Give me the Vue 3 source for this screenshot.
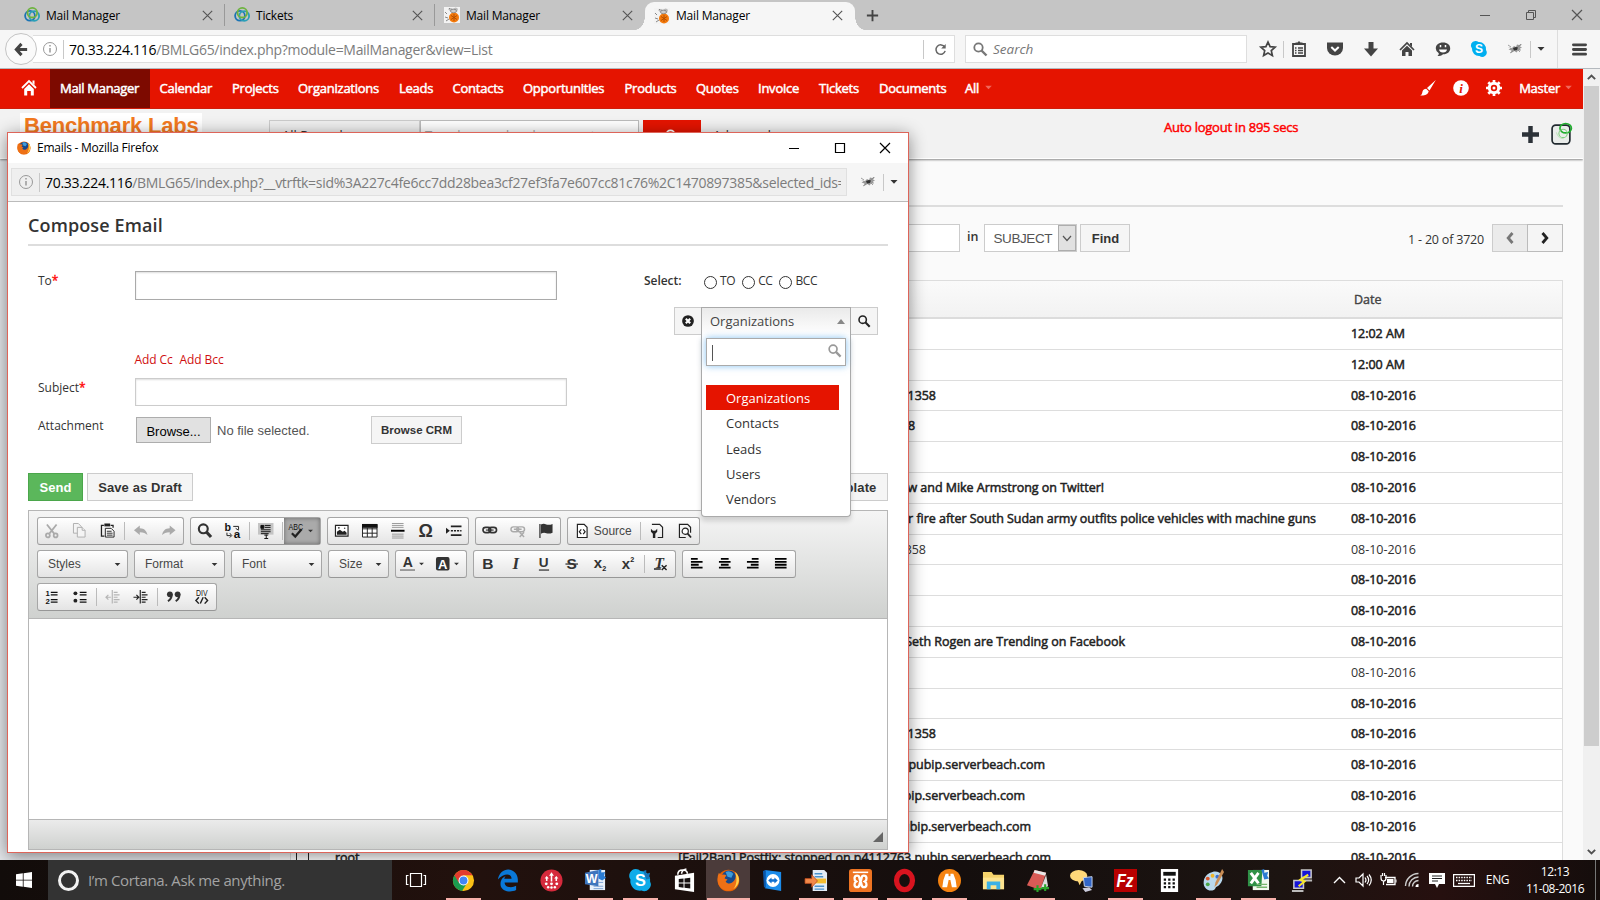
<script setup>
const tabs = [
  { icon: 'rings', title: 'Mail Manager' },
  { icon: 'rings', title: 'Tickets' },
  { icon: 'bug', title: 'Mail Manager' },
  { icon: 'bug', title: 'Mail Manager', active: true },
]

const navItems = ['Mail Manager', 'Calendar', 'Projects', 'Organizations', 'Leads', 'Contacts', 'Opportunities', 'Products', 'Quotes', 'Invoice', 'Tickets', 'Documents', 'All']

const rows = [
  { date: '12:02 AM' },
  { date: '12:00 AM' },
  { subject: '1358', end: 936, date: '08-10-2016' },
  { subject: '8', end: 915, date: '08-10-2016' },
  { date: '08-10-2016' },
  { subject: 'w and Mike Armstrong on Twitter!', end: 1104, date: '08-10-2016' },
  { subject: 'r fire after South Sudan army outfits police vehicles with machine guns', end: 1316, date: '08-10-2016' },
  { subject: '1358', end: 926, date: '08-10-2016', read: true },
  { date: '08-10-2016' },
  { date: '08-10-2016' },
  { subject: 'Seth Rogen are Trending on Facebook', end: 1125, date: '08-10-2016' },
  { date: '08-10-2016', read: true },
  { date: '08-10-2016' },
  { subject: '1358', end: 936, date: '08-10-2016' },
  { subject: 'pubip.serverbeach.com', end: 1045, date: '08-10-2016' },
  { subject: 'pubip.serverbeach.com', end: 1025, date: '08-10-2016' },
  { subject: 'pubip.serverbeach.com', end: 1031, date: '08-10-2016' },
  { from: 'root', subject: '[Fail2Ban] Postfix: stopped on p4112763.pubip.serverbeach.com', end: 1051, date: '08-10-2016' },
]

const options = ['Organizations', 'Contacts', 'Leads', 'Users', 'Vendors']

const toolbarRows = [
  [
    { items: ['cut', 'copy', 'paste', '|', 'undo', 'redo'] },
    { items: ['find', 'replace', '|', 'selectall', '|', 'spell'] },
    { items: ['image', 'table', 'rule', 'omega', 'pagebreak'] },
    { items: ['link', 'unlink', 'flag'] },
    { items: ['source', '|', 'template', 'preview'] },
  ],
  [
    { combo: 'Styles', cls: 'wide' },
    { combo: 'Format', cls: 'wide' },
    { combo: 'Font', cls: 'wide' },
    { combo: 'Size', cls: 'narrow' },
    { items: ['color', 'bgcolor'] },
    { items: ['bold', 'italic', 'underline', 'strike', 'sub', 'sup', '|', 'clear'] },
    { items: ['left', 'center', 'right', 'justify'] },
  ],
  [{ items: ['numlist', 'bullist', '|', 'outdent', 'indent', '|', 'quote', 'div'] }],
]

const apps = [
  { icon: 'chrome', run: true }, { icon: 'edge' }, { icon: 'redball' }, { icon: 'word', run: true },
  { icon: 'skypeBig', run: true }, { icon: 'store' }, { icon: 'firefox', run: true, active: true }, { icon: 'teamviewer' },
  { icon: 'transfer', run: true }, { icon: 'xampp', run: true }, { icon: 'opera', run: true }, { icon: 'binoculars', run: true },
  { icon: 'folder' }, { icon: 'notebook', run: true }, { icon: 'chat' }, { icon: 'filezilla', run: true },
  { icon: 'calc' }, { icon: 'paint', run: true }, { icon: 'excel', run: true }, { icon: 'putty' },
]

const F = 'font-family="Liberation Sans, sans-serif"'
const firefoxArt = '<circle cx="12" cy="12" r="11.3" fill="#e66000"/><circle cx="12.500" cy="9.500" r="8" fill="#17498c"/><path d="M9 3q5-2 8 2l-2 4-4-1z" fill="#3e9bd8"/><path d="M2 4q1 2 3 2 3-1 5 1-2 1-2 3l3 1-2 2c2 3 6 3 9-1 2-3 2-6 0-9 5 3 6 9 3 14-4 7-14 8-19 0C0 13 0 8 2 4z" fill="#ee7015"/><path d="M19 3c6 5 5 14-2 18 4-5 4-11 2-18z" fill="#ffd14a"/>'
const icons = {
  rings: '<g fill="none" stroke-width="1.8"><circle cx="6" cy="8.8" r="4.9" stroke="#1b74b4"/><circle cx="10.2" cy="9" r="4.9" stroke="#2b9fb8"/><circle cx="8.3" cy="5.7" r="4.8" stroke="#6db33f"/></g>',
  bug: '<rect width="16" height="16" fill="#f3f3f3"/><path d="M4 2q3-2 5 0l-2 3zM9 2q3-3 5 0l-1 3-3-1z" fill="#bbb"/><path d="M1 5l2 2M1 10l3 1M2 14l3-2M5 1l1 1" stroke="#888"/><circle cx="10" cy="10.500" r="5" fill="#f47a0c"/><ellipse cx="9.500" cy="4" rx="3" ry="1.800" fill="#ccc" stroke="#666" stroke-width=".6"/><path d="M7 8.500l6 4M13 8.500l-6 4M10 7v7" stroke="#b04d00" stroke-width=".9"/>',
  x: '<path d="M3 3l10 10M13 3L3 13" stroke="currentColor" stroke-width="1.2" fill="none"/>',
  plus: '<path d="M8 2v12M2 8h12" stroke="currentColor" stroke-width="2"/>',
  min: '<path d="M3 8.5h10" stroke="currentColor"/>',
  max: '<path d="M3.5 3.5h9v9h-9z" fill="none" stroke="currentColor" stroke-width="1.2"/>',
  restore: '<path d="M3.500 5.500h7v7h-7zM5.500 5V3.500h7v7H11" fill="none" stroke="currentColor"/>',
  back: '<path d="M8 2L2.500 8 8 14M3 8h11" stroke="#444" stroke-width="3.200" fill="none"/>',
  info: '<circle cx="8" cy="8" r="6.500" fill="none" stroke="#999"/><path d="M8 7v4.500M8 4v1.600" stroke="#999" stroke-width="1.500"/>',
  reload: '<path d="M12.500 5.500A5 5 0 1 0 13 9.500" fill="none" stroke="#666" stroke-width="1.600"/><path d="M13.500 2v5H8.700z" fill="#666"/>',
  search: '<circle cx="6.500" cy="6.500" r="4.200" fill="none" stroke="currentColor" stroke-width="1.800"/><path d="M9.500 9.500l5 5" stroke="currentColor" stroke-width="2.400"/>',
  star: '<path d="M8 1l2.100 4.700 5 .5-3.800 3.400 1.100 5L8 12.100l-4.400 2.500 1.100-5L.9 6.200l5-.5z" fill="none" stroke="#444" stroke-width="1.700"/>',
  clip: '<path d="M2 3h12v12H2z" fill="none" stroke="#444" stroke-width="1.800"/><path d="M4.500 3V1.500h2L8 0l1.500 1.500h2V4h-7z" fill="#444"/><path d="M4 7h1.500M7 7h5M4 9.500h1.500M7 9.500h5M4 12h1.500M7 12h5" stroke="#444" stroke-width="1.400"/>',
  pocket: '<path d="M0 1.500h16V7a8 7.500 0 0 1-16 0z" fill="#444"/><path d="M4.300 6L8 9.500 11.700 6" fill="none" stroke="#fff" stroke-width="2"/>',
  down: '<path d="M5.500 1h5v6.500H15L8 15.500 1 7.500h4.500z" fill="#444"/>',
  home: '<path d="M1 9l7-7 7 7" fill="none" stroke="#444" stroke-width="1.700"/><path d="M11 2h2v4l-2-2zM3 9.500L8 4.700l5 4.800V15H9.500v-4h-3v4H3z" fill="#444"/>',
  smile: '<path d="M8 1.500c4.500 0 7.200 2.500 7.200 6S12 13.500 8 13.300c-1.500 1.500-3.500 1.700-5.500 1.700q1.500-1 1.300-2.700Q.8 10.500.8 7.500C.8 4 3.500 1.500 8 1.500z" fill="#444"/><path d="M5.500 4v2.300M10.500 4v2.300" stroke="#fff" stroke-width="1.500"/><path d="M4 8.500h8q-.5 3-4 3t-4-3z" fill="#fff"/>',
  skype: `<path d="M4.500 0a4.500 4.500 0 0 1 3 1 7 7 0 0 1 7.500 8 4.500 4.500 0 0 1-6.500 6A7 7 0 0 1 1 7.500 4.500 4.500 0 0 1 4.500 0z" fill="#00aff0"/><text x="8" y="12.300" ${F} font-size="12" font-weight="700" fill="#fff" text-anchor="middle">S</text>`,
  plane: '<path d="M1 6.500l4 .5 2-2 2 1 1-2.500 2 .5 3-1-2 2.500 2 1-2 1 1 2-3 0-1.500 2-2-1.500-3.500 2 .5-2.500-3-1 2-1z" fill="#999"/><path d="M6 7l3-1 2 .5-1 2.500-3 .5z" fill="#333"/><path d="M1 4l3 2M14 3l-3 3M3 12l3-2M13 11l-2-2" stroke="#888" stroke-width=".8"/>',
  caret: '<path d="M4.500 6h7L8 9.800z" fill="currentColor"/>',
  menu: '<path d="M1.500 3h13M1.500 8h13M1.500 13h13" stroke="#444" stroke-width="3" stroke-linecap="round"/>',
  homeNav: '<path d="M1 8l7-7 7 7" fill="none" stroke="#fff" stroke-width="1.800"/><path d="M11.500.5h2V5l-2-2zM3.200 9L8 4.300 12.800 9v6.500h-3V11H6.200v4.500h-3z" fill="#fff"/>',
  brush: '<path d="M15.800 0L7 8l2.500 2.500zM6.200 8.800l2.500 2.500C8 15 4 16 0 15.500c2-.5 2-2 2.500-4 .5-1.600 2-2.700 3.700-2.700z" fill="#fff"/>',
  infoNav: '<circle cx="8" cy="8" r="7.800" fill="#fff"/><text x="8" y="12.500" font-family="Liberation Serif, serif" font-size="13" font-style="italic" font-weight="700" fill="#e51400" text-anchor="middle">i</text>',
  gear: '<circle cx="8" cy="8" r="4.700" fill="none" stroke="#fff" stroke-width="3"/><path d="M8 0v3M8 13v3M0 8h3M13 8h3M2.300 2.300l2 2M11.700 11.700l2 2M13.700 2.300l-2 2M4.300 11.700l-2 2" stroke="#fff" stroke-width="2.700"/><circle cx="8" cy="8" r="1.500" fill="#fff"/>',
  plusBig: '<path d="M8 0v16M0 8h16" stroke="#2c3238" stroke-width="4.200"/>',
  badge: '<rect x="1" y="2" width="17" height="18" rx="3.500" fill="#e9ecea" stroke="#222a30" stroke-width="1.600"/><g fill="none"><ellipse cx="14" cy="5" rx="5.500" ry="4.500" stroke="#1fae2e" stroke-width="1.600"/><circle cx="11.500" cy="10" r="4" stroke="#7fcf7f"/><path d="M5 9q2 6 7 6" stroke="#bfe3bf"/></g>',
  chevL: '<path d="M10.500 3l-4.300 5 4.300 5" fill="none" stroke="#777" stroke-width="2.800"/>',
  chevR: '<path d="M5.500 3l4.300 5-4.300 5" fill="none" stroke="#222" stroke-width="2.800"/>',
  chevD: '<path d="M4 6l4 4.500L12 6" fill="none" stroke="#555" stroke-width="1.200"/>',
  scrollU: '<path d="M3.500 10L8 5.500l4.500 4.500" fill="none" stroke="#505050" stroke-width="2.300"/>',
  scrollD: '<path d="M3.500 6L8 10.500 12.500 6" fill="none" stroke="#505050" stroke-width="2.300"/>',
  clearSel: '<circle cx="8" cy="8" r="6.700" fill="#222"/><path d="M5.500 5.500l5 5M10.500 5.500l-5 5" stroke="#fff" stroke-width="2.400"/>',
  cut: '<g stroke="#aaa" fill="none" stroke-width="1.800"><path d="M3 1.500l7.500 9.500M13 1.500L5.500 11"/><circle cx="4" cy="12.800" r="2"/><circle cx="12" cy="12.800" r="2"/></g>',
  copy: '<g stroke="#b0b0b0" fill="#f4f4f4"><path d="M1.500.500h5l3 3v7h-8z"/><path d="M5.500 4.500h5l3 3v7h-8z"/><path d="M10.500 4.500v3h3" /></g>',
  paste: '<path d="M4 2.500H1.500v11h3M11 2.500h2.500V5" fill="none" stroke="#222" stroke-width="1.300"/><path d="M4.500.500h6v3h-6z" fill="#222"/><path d="M5.500 5.500h6l3 3v6h-9z" fill="#fff" stroke="#222"/><path d="M7 8.500h5M7 10.500h6M7 12.500h6" stroke="#222"/>',
  undo: '<path d="M1 7.500l6-5v3c5 0 7 3 8 7-2-2-4-3-8-3v3z" fill="#aaa"/>',
  redo: '<path d="M15 7.500L9 2.500v3c-5 0-7 3-8 7 2-2 4-3 8-3v3z" fill="#aaa"/>',
  find: '<circle cx="6.500" cy="6" r="4.600" fill="none" stroke="#333" stroke-width="2.200"/><path d="M9.500 9l5 5.500" stroke="#333" stroke-width="3.200"/>',
  replace: `<text x="-.5" y="8" ${F} font-size="11" font-weight="700" fill="#111">b</text><text x="9" y="15.500" ${F} font-size="12" font-weight="700" fill="#111">a</text><path d="M8.500 3.500H14V7M11 5.500l3 2 M2 10v3h4M5 10.500l2 2.500-2 2" fill="none" stroke="#222"/>`,
  selectall: '<path d="M0 0h16v12H0z" fill="#c4c4c4"/><path d="M3 2.500h3v3H3zM7 2.500h6M7 4.500h6M3 7h10M3 9h10M3 11h8" stroke="#111" fill="#111"/><path d="M6.500 12.500h4M6.500 16h4M8.500 12v4" stroke="#111"/>',
  spell: `<text x="8" y="7" ${F} font-size="9.500" textLength="15" lengthAdjust="spacingAndGlyphs" fill="#111" text-anchor="middle">ABC</text><path d="M4 10.500L7.500 14 14 6.500" fill="none" stroke="#222" stroke-width="2.300"/>`,
  image: '<path d="M1.500 2.500h13v11h-13z" fill="#fff" stroke="#222" stroke-width="1.200"/><path d="M3 12V9l3-2 3 2 2-1 2 2v2z" fill="#222"/><circle cx="5" cy="5" r="1" fill="#444"/><circle cx="11" cy="5.500" r=".8" fill="#444"/>',
  table: '<path d="M.5 1.500h15v13H.5zM.5 6h15M.5 10.500h15M5.500 5v9.500M10.500 5v9.500" fill="#fff" stroke="#222"/><path d="M0 1h16v4H0z" fill="#111"/>',
  rule: '<path d="M2 .5h12M2 2.500h12M2 4.500h12M2 11.500h12M2 13.500h12M2 15.500h12" stroke="#999"/><path d="M1 8h14" stroke="#000" stroke-width="2"/>',
  omega: `<text x="8" y="14.500" ${F} font-size="18.500" font-weight="700" fill="#333" text-anchor="middle">Ω</text>`,
  pagebreak: '<path d="M0 5l4 3-4 3z" fill="#222"/><path d="M5 3.500h11M5 12.500h11" stroke="#222" stroke-width="2"/><path d="M5 8h11" stroke="#222" stroke-width="1.300" stroke-dasharray="2.200 1"/>',
  link: '<g fill="none" stroke="#333" stroke-width="1.700"><rect x="1" y="4.500" width="8" height="5.500" rx="2.700"/><rect x="7" y="4.500" width="8" height="5.500" rx="2.700"/></g><path d="M4 7.300h8" stroke="#333" stroke-width="1.200"/>',
  unlink: '<g fill="none" stroke="#aaa" stroke-width="1.500"><rect x="1" y="4" width="8" height="5" rx="2.500"/><rect x="7" y="4" width="8" height="5" rx="2.500"/><path d="M4 6.500h8M10 9.500l4.500 5M14.500 9.500l-4.500 5"/></g>',
  flag: '<path d="M2 1v14.500" stroke="#222" stroke-width="1.200"/><path d="M3 1.500q3-1.500 5.500 0 3 1 6.500-.5v9q-3.500 1.500-6.500.5-2.500-1-5.500.5z" fill="#333"/>',
  source: '<path d="M3.500 1.500h7l3 3v10.500h-10z" fill="#fff" stroke="#222" stroke-width="1.200"/><path d="M7.500 6.500l-2 2.500 2 2.500M9.500 6.500l2 2.500-2 2.500" fill="none" stroke="#222" stroke-width="1.200"/>',
  template: '<path d="M6 1.500h5l3 3v10.500H9M3 1.500h3" fill="none" stroke="#222" stroke-width="1.200"/><path d="M2 6v3l2 2v4.500h2.500V11l2-2V6L6.500 8H4z" fill="#222"/>',
  preview: '<path d="M14 10V4.500l-3-3H2.500v13.500H9" fill="none" stroke="#222" stroke-width="1.200"/><circle cx="8.500" cy="8.500" r="3.200" fill="#fff" stroke="#222" stroke-width="1.200"/><path d="M11 11l3.500 4" stroke="#222" stroke-width="1.800"/>',
  color: `<text x="8" y="11.500" ${F} font-size="14.500" font-weight="700" fill="#333" text-anchor="middle">A</text><path d="M0 14.500h15.500" stroke="#999" stroke-width="2"/>`,
  bgcolor: `<rect x="1" y="1" width="14" height="14" rx="2" fill="#333"/><text x="8" y="13" ${F} font-size="13.500" font-weight="700" fill="#fff" text-anchor="middle">A</text>`,
  bold: `<text x="8" y="13.500" ${F} font-size="16" font-weight="700" fill="#333" text-anchor="middle">B</text>`,
  italic: '<text x="8" y="13.500" font-family="Liberation Serif, serif" font-size="17.500" font-style="italic" font-weight="700" fill="#333" text-anchor="middle">I</text>',
  underline: `<text x="8" y="11.500" ${F} font-size="14" font-weight="700" fill="#333" text-anchor="middle">U</text><path d="M3 14.500h10.500" stroke="#333" stroke-width="1.300"/>`,
  strike: `<text x="8" y="13.500" ${F} font-size="16" font-weight="700" fill="#333" text-anchor="middle">S</text><path d="M1.500 8.300h13" stroke="#333" stroke-width="1.300"/>`,
  sub: `<text x="6" y="12" ${F} font-size="15.500" font-weight="700" fill="#333" text-anchor="middle">x</text><text x="10.500" y="15" ${F} font-size="7.500" font-weight="700" fill="#222">2</text>`,
  sup: `<text x="6" y="13" ${F} font-size="15.500" font-weight="700" fill="#333" text-anchor="middle">x</text><text x="10.500" y="6.500" ${F} font-size="7.500" font-weight="700" fill="#222">2</text>`,
  clear: `<text x="6.500" y="12" font-family="Liberation Serif, serif" font-size="16" font-style="italic" font-weight="700" fill="#333" text-anchor="middle">T</text><path d="M1 13.500h7M9 9.500l5 5M14 9.500l-5 5" stroke="#222" stroke-width="1.500"/>`,
  left: '<path d="M2 3h7M2 6h12M2 9h8M2 12h12" stroke="#000" stroke-width="1.900"/>',
  center: '<path d="M4 3h8M2 6h12M4 9h8M2 12h12" stroke="#000" stroke-width="1.900"/>',
  right: '<path d="M7 3h7M2 6h12M6 9h8M2 12h12" stroke="#000" stroke-width="1.900"/>',
  justify: '<path d="M2 3h12M2 6h12M2 9h12M2 12h12" stroke="#000" stroke-width="1.900"/>',
  numlist: `<text x="1.500" y="7.500" ${F} font-size="8" font-weight="700" fill="#111">1</text><text x="1.500" y="15" ${F} font-size="8" font-weight="700" fill="#111">2</text><path d="M7 3.500h7M7 6h7M7 11h7M7 13.500h7" stroke="#111" stroke-width="1.200"/>`,
  bullist: '<circle cx="3.500" cy="4.500" r="2" fill="#222"/><circle cx="3.500" cy="12" r="2" fill="#222"/><path d="M8 3.500h7M8 6h7M8 11h7M8 13.500h7" stroke="#111" stroke-width="1.200"/>',
  outdent: '<path d="M7.500 1v14M9 3.500h4M9 6h6M9 8.500h4M9 11h6M9 13.500h4M1 8.500h5M3.500 6L1 8.500 3.500 11" fill="none" stroke="#b5b5b5" stroke-width="1.200"/>',
  indent: '<path d="M7.500 1v14M9 3.500h4M9 6h6M9 8.500h4M9 11h6M9 13.500h4M.5 8.500h5M3.500 6L6 8.500 3.500 11" fill="none" stroke="#222" stroke-width="1.200"/>',
  quote: '<circle cx="4" cy="5.500" r="3" fill="#333"/><circle cx="12" cy="5.500" r="3" fill="#333"/><path d="M5.800 5.500q.3 4.500-3.800 7M13.800 5.500q.3 4.500-3.800 7" fill="none" stroke="#333" stroke-width="2"/>',
  div: `<text x="8" y="7" ${F} font-size="9.500" textLength="12" lengthAdjust="spacingAndGlyphs" fill="#111" text-anchor="middle">DIV</text><path d="M5 8.500l-3 3.300 3 3.300M11 8.500l3 3.300-3 3.300M9.500 8.500l-3 6.500" fill="none" stroke="#222" stroke-width="1.500"/>`,
  win: '<path d="M0 2.300l6.800-1v6.400H0zM7.600 1.200L16 0v7.700H7.600zM0 8.400h6.800v6.300L0 13.800zM7.600 8.400H16V16l-8.400-1.200z" fill="#fff"/>',
  taskview: '<path d="M5.500 2.500h11v13h-11zM3.500 4.500h-2v9h2M18.500 4.500h2v9h-2" fill="none" stroke="#fff" stroke-width="1.200"/>',
  chrome: '<circle cx="12" cy="12" r="11" fill="#fbc116"/><path d="M2.500 6.500A11 11 0 0 0 10.500 22.900L16 14z" fill="#1a9c50"/><path d="M12 6.500h9.500a11 11 0 0 0-19 0L7 14z" fill="#e33b2e"/><circle cx="12" cy="12" r="5.200" fill="#fff"/><circle cx="12" cy="12" r="4.100" fill="#4285f4"/>',
  edge: '<path d="M2 11C3 4 8 .500 12.500.500 19 .500 22.800 6 22.800 11v3H9c0 5.500 8 6 12 3.500v4.500c-6 3-14 1.500-16-4C4 14 5.500 9 10 7.500c-1 1-1.300 2-1.300 2.800h7.500C16.500 4 8 4 2 11z" fill="#0a78d7"/>',
  redball: '<circle cx="12" cy="12" r="11.500" fill="#d62a3c"/><path d="M12 13V6M7 12.500V9M17 12.500V9" stroke="#fff" stroke-width="1.600" fill="none"/><path d="M9.500 7L12 3.500 14.500 7zM4.800 10L7 7.200 9.200 10zM14.800 10L17 7.200l2.200 2.800z" fill="#fff"/><g fill="#fff"><circle cx="6.500" cy="15.500" r="1.500"/><circle cx="12" cy="15.500" r="1.500"/><circle cx="17.500" cy="15.500" r="1.500"/><circle cx="8.500" cy="19" r="1.300"/><circle cx="12" cy="19.300" r="1.300"/><circle cx="15.500" cy="19" r="1.300"/></g>',
  word: `<path d="M6 1h16v21H6z" fill="#e8f0fa"/><path d="M15 4h5M15 7h5M15 14h5M10 18h10M10 20.500h10" stroke="#7ba1d4"/><path d="M1 4l14-3v17L1 16z" fill="#3f75bd"/><text x="8" y="15" ${F} font-size="13" font-weight="700" fill="#fff" text-anchor="middle">W</text><path d="M15 1l3-1v4l4-1-1 4 2 2-4 3-4-2z" fill="#2b7cd3"/>`,
  skypeBig: `<path d="M7 0a7 7 0 0 1 5 2 10 10 0 0 1 10 11 7 7 0 0 1-9 9.500A10 10 0 0 1 1.500 11 7 7 0 0 1 7 0z" fill="#0eabe9"/><text x="12" y="18" ${F} font-size="17" font-weight="700" fill="#fff" text-anchor="middle">S</text><path d="M15 2l3-1v4l4-1-1 4 1 2-4 1z" fill="#1575b8"/>`,
  store: '<path d="M2 7l20-3v20L2 21z" fill="#fff"/><path d="M5 6q0-5 5-5t5 4M9 5q0-4 5-5" fill="none" stroke="#fff" stroke-width="1.600"/><path d="M6 10.500l5-.6v4.300H6zM12 9.800l6-.8v5.200h-6zM6 15.200h5v4.300l-5-.6zM12 15.200h6v5.200l-6-.8z" fill="#151010"/>',
  firefox: firefoxArt,
  teamviewer: '<path d="M4 1l17 2v20L4 20z" fill="#1b8bea"/><path d="M2 2l3-1v19l-2-2z" fill="#0a55a8"/><circle cx="12.500" cy="12" r="6.800" fill="#fff"/><path d="M7.500 12L11 8.800v2h3v-2l3.500 3.200L14 15.200v-2h-3v2z" fill="#0f6fd0"/>',
  transfer: '<path d="M8 1h12l3 3v19H8z" fill="#e3edf7"/><path d="M10 5h8M10 8h9M10 18h10M10 21h10" stroke="#4b93cc" stroke-width="1.500"/><path d="M10 10h12v5H10z" fill="#f5bd2f"/><path d="M0 10h7V6l6 6.500L7 19v-4H0z" fill="#f28a4a" stroke="#b9481c" stroke-width=".8"/>',
  xampp: '<rect width="24" height="24" rx="3" fill="#ee7422"/><path d="M4 3.500h16" stroke="#fff" stroke-width="1.600"/><path d="M12 13c-2-3 0-6-3.500-6S5 11.500 7.500 13C5 14.500 5 19 8.500 19S10 16 12 13c2-3 0-6 3.500-6s3.500 4.500 1 6c2.500 1.500 2.500 6-1 6S14 16 12 13z" fill="none" stroke="#fff" stroke-width="2.400"/>',
  opera: '<ellipse cx="12" cy="12" rx="8.300" ry="9.500" fill="none" stroke="#d8141f" stroke-width="5.500"/>',
  binoculars: '<circle cx="12" cy="12" r="12" fill="#f5820f"/><path d="M8 5h3v7l-1.500 7H4.500Q5 11 8 5zM13 5h3q3 6 3.500 14h-5L13 12z" fill="#fff"/><path d="M10.500 7.500h3v4h-3z" fill="#fff"/>',
  folder: '<path d="M1 3h9l2 3h11v15H1z" fill="#f5d36b"/><path d="M1 9h22v12H1z" fill="#fde48f"/><path d="M5 21v-8h14v8h-4v-4H9v4z" fill="#3cb1e6"/>',
  notebook: '<path d="M9 1l12 3-6 18L1 17z" fill="#d95b56"/><path d="M9 1l12 3-1 3L8 4z" fill="#e8e8e8"/><path d="M15 21l6-15 2 12z" fill="#ddd"/><path d="M8 21h8M12 17v7M16 20h8M20 16v7" stroke="#2aa42a" stroke-width="2.200"/>',
  chat: '<ellipse cx="9" cy="7" rx="9" ry="6" fill="#ffd879"/><path d="M8 12l2 5 3-6z" fill="#ffd879"/><path d="M14 9l9-1v11l-8-1z" fill="#3266c8" stroke="#c9d4ea"/><path d="M13 20l7-1 3 3-7 2z" fill="#ccd"/>',
  filezilla: `<rect width="24" height="24" fill="#b80000"/><text x="11.500" y="19" ${F} font-size="19" font-weight="700" font-style="italic" textLength="18" lengthAdjust="spacingAndGlyphs" fill="#fff" text-anchor="middle">Fz</text>`,
  calc: '<path d="M3 0h18v24H3z" fill="#fff"/><path d="M5.500 3h13v4h-13z" fill="#111"/><path d="M6 11h12M6 15h12M6 19h12" stroke="#111" stroke-width="2.400" stroke-dasharray="2.400 2.200"/>',
  paint: '<path d="M11 3C19 1 24 8 20 14s-5 3-6 6-8 4-11-1S2 5 11 3z" fill="#b9d9ee"/><circle cx="6" cy="10" r="2" fill="#d9572d"/><circle cx="11" cy="7" r="2" fill="#f0b52a"/><circle cx="6" cy="16" r="2" fill="#4aa648"/><circle cx="16" cy="8" r="2" fill="#3a6fd0"/><path d="M21 0l2 3-7 13-3 3 1-5z" fill="#c98d55"/>',
  excel: '<path d="M6 1h17v21H6z" fill="#f2f8ee"/><path d="M1 1h15l-1 17H1z" fill="#2f9147"/><path d="M4 4l8 11M12 4L4 15" stroke="#fff" stroke-width="3"/><path d="M15 1l3-1v4l4-1-1 4 2 3-5 1z" fill="#2b7cd3"/><path d="M10 16h11M10 19h11" stroke="#78b56e" stroke-width="1.400"/>',
  putty: '<path d="M11 1h10v8H11zM3 12h10v8H3z" fill="#1414d8" stroke="#c8c8c8" stroke-width="1.600"/><path d="M10 11h12v2H10zM1 22h12v2H1z" fill="#bbb"/><path d="M18 6l-8 5 4 2-6 5" fill="none" stroke="#f5e62a" stroke-width="2.200"/>',
  trayUp: '<path d="M3 11l5.500-5.500L14 11" fill="none" stroke="#fff" stroke-width="1.400"/>',
  speaker: '<path d="M1 6h3l4-4v12l-4-4H1zM10 5.500q2 2.500 0 5M12 4q3.300 4 0 8M14 2.500q4.500 5.500 0 11" fill="none" stroke="#fff" stroke-width="1.200"/>',
  battery: '<path d="M5 5.500h10v7H6" fill="none" stroke="#fff" stroke-width="1.300"/><path d="M7 7h6.500v4H7zM15.500 7.500h1v3h-1z" fill="#fff"/><path d="M1 3v3q0 3 2.500 3T6 6V3M2.500 1v3M4.500 1v3M3.500 9v4" fill="none" stroke="#fff" stroke-width="1.200"/>',
  wifi: '<path d="M1.500 14A13 13 0 0 1 14.500 1.500M5 14.500A9.500 9.500 0 0 1 14.500 5M8.500 14.500a6 6 0 0 1 6-6" fill="none" stroke="#ccc" stroke-width="1.400"/><path d="M11.500 15a3 3 0 0 1 3-3v3z" fill="#fff"/>',
  notif: '<path d="M0 1h16v11h-6l-2 4-2-4H0z" fill="#fff"/><path d="M3 4h10M3 6.500h10M3 9h6" stroke="#222"/>',
  keyboard: '<path d="M.6 1.600h20.800v11.800H.6z" fill="none" stroke="#fff" stroke-width="1.200"/><path d="M3 4.500h16M3 7.500h16" stroke="#fff" stroke-width="1.300" stroke-dasharray="1.500 1.100"/><path d="M5 10.500h12" stroke="#fff" stroke-width="1.300"/>',
}

const browserTools = ['clip', 'pocket', 'down', 'home', 'smile', 'skype', 'plane']
const withMenu = ['spell', 'color', 'bgcolor']
</script>

<template>
  <div class="desktop">
    <header class="tabbar">
      <div v-for="(t, i) in tabs" :key="i" class="tab" :class="{ active: t.active }">
        <svg class="i16" viewBox="0 0 16 16" v-html="icons[t.icon]"></svg>
        <span>{{ t.title }}</span>
        <svg class="i16 close" viewBox="0 0 16 16" v-html="icons.x"></svg>
      </div>
      <svg class="newtab" viewBox="0 0 16 16" v-html="icons.plus"></svg>
      <div class="winbtns">
        <svg viewBox="0 0 16 16" v-html="icons.min"></svg>
        <svg viewBox="0 0 16 16" v-html="icons.restore"></svg>
        <svg viewBox="0 0 16 16" v-html="icons.x"></svg>
      </div>
    </header>

    <div class="urlbar">
      <div class="backbtn"><svg viewBox="0 0 16 16" v-html="icons.back"></svg></div>
      <div class="field address">
        <svg class="i16" viewBox="0 0 16 16" v-html="icons.info"></svg>
        <i class="vsep"></i>
        <span class="url"><b>70.33.224.116</b>/BMLG65/index.php?module=MailManager&amp;view=List</span>
        <i class="vsep"></i>
        <svg class="reload" viewBox="0 0 16 16" v-html="icons.reload"></svg>
      </div>
      <div class="field searchbox">
        <svg class="i16" viewBox="0 0 16 16" v-html="icons.search"></svg>
        <em>Search</em>
      </div>
      <svg class="i16 starbtn" viewBox="0 0 16 16" v-html="icons.star"></svg>
      <i class="vsep short"></i>
      <div class="tools">
        <svg v-for="n in browserTools" :key="n" class="i16" viewBox="0 0 16 16" v-html="icons[n]"></svg>
      </div>
      <i class="vsep short"></i>
      <svg class="i16 drop" viewBox="0 0 16 16" v-html="icons.caret"></svg>
      <div class="menubtn"><svg viewBox="0 0 16 16" v-html="icons.menu"></svg></div>
    </div>

    <div class="page">
      <div class="view">
        <nav class="nav">
          <div class="homecell"><svg class="i16" viewBox="0 0 16 16" v-html="icons.homeNav"></svg></div>
          <div v-for="(n, i) in navItems" :key="n" class="navitem" :class="{ on: i === 0 }">
            {{ n }}<svg v-if="n === 'All'" class="navcaret" viewBox="0 0 16 16" v-html="icons.caret"></svg>
          </div>
          <div class="navright">
            <svg class="i16" viewBox="0 0 16 16" v-html="icons.brush"></svg>
            <svg class="i16" viewBox="0 0 16 16" v-html="icons.infoNav"></svg>
            <svg class="i16" viewBox="0 0 16 16" v-html="icons.gear"></svg>
            <span>Master</span>
            <svg class="navcaret" viewBox="0 0 16 16" v-html="icons.caret"></svg>
          </div>
        </nav>
        <div class="subhead">
          <div class="logo">Benchmark Labs</div>
          <div class="allrec">All Records</div>
          <div class="kw">Type keyword and press enter</div>
          <div class="go"><svg class="i16" viewBox="0 0 16 16" v-html="icons.search"></svg></div>
          <div class="adv">Advanced</div>
          <div class="logout">Auto logout in 895 secs</div>
          <svg class="addbtn" viewBox="0 0 16 16" v-html="icons.plusBig"></svg>
          <svg class="badge" viewBox="0 0 20 22" v-html="icons.badge"></svg>
        </div>
        <div class="body">
          <aside class="side"></aside>
          <main class="main">
            <div class="filters">
              <div class="finput"></div>
              <b class="inlabel">in</b>
              <div class="fselect"><span>SUBJECT</span><i><svg viewBox="0 0 16 16" v-html="icons.chevD"></svg></i></div>
              <div class="findbtn">Find</div>
              <div class="range">1 - 20 of 3720</div>
              <div class="pg off"><svg class="i16" viewBox="0 0 16 16" v-html="icons.chevL"></svg></div>
              <div class="pg"><svg class="i16" viewBox="0 0 16 16" v-html="icons.chevR"></svg></div>
            </div>
            <div class="list">
              <div class="lrow head"><span></span><span></span><span></span><span class="date">Date</span></div>
              <div v-for="(r, i) in rows" :key="i" class="lrow" :class="{ read: r.read }">
                <span class="check"><i></i></span>
                <span class="from">{{ r.from }}</span>
                <span class="subj"><span :style="{ width: (r.end || 678) - 678 + 'px' }">{{ r.subject }}</span></span>
                <span class="date">{{ r.date }}</span>
              </div>
            </div>
          </main>
        </div>
      </div>
      <div class="scrollbar">
        <svg viewBox="0 0 16 16" v-html="icons.scrollU"></svg>
        <div class="thumb"></div>
        <svg viewBox="0 0 16 16" v-html="icons.scrollD"></svg>
      </div>
    </div>

    <section class="popup">
      <div class="ptitle">
        <svg class="ffx" viewBox="0 0 24 24" v-html="icons.firefox"></svg>
        <span>Emails - Mozilla Firefox</span>
        <div class="pbtns">
          <svg viewBox="0 0 16 16" v-html="icons.min"></svg>
          <svg viewBox="0 0 16 16" v-html="icons.max"></svg>
          <svg viewBox="0 0 16 16" v-html="icons.x"></svg>
        </div>
      </div>
      <div class="pbar">
        <div class="paddr">
          <svg class="i16" viewBox="0 0 16 16" v-html="icons.info"></svg>
          <i class="vsep"></i>
          <span class="url"><b>70.33.224.116</b>/BMLG65/index.php?__vtrftk=sid%3A227c4fe6cc7dd28bea3cf27ef3fa7e607cc81c76%2C1470897385&amp;selected_ids=</span>
        </div>
        <svg class="i16 pplane" viewBox="0 0 16 16" v-html="icons.plane"></svg>
        <i class="vsep short"></i>
        <svg class="i16 pdrop" viewBox="0 0 16 16" v-html="icons.caret"></svg>
      </div>

      <div class="compose">
        <h1>Compose Email</h1>
        <div class="torow">
          <label>To<s>*</s></label>
          <div class="box to"></div>
          <b class="sel">Select:</b>
          <div class="radios"><span><i></i>TO</span><span><i></i>CC</span><span><i></i>BCC</span></div>
        </div>
        <div class="pickrow">
          <div class="addon"><svg class="i16" viewBox="0 0 16 16" v-html="icons.clearSel"></svg></div>
          <div class="picker">
            <div class="pickhead">Organizations<u></u></div>
            <div class="pickmenu">
              <div class="picksearch"><i></i><svg class="i16" viewBox="0 0 16 16" v-html="icons.search"></svg></div>
              <ul>
                <li v-for="(o, i) in options" :key="o" :class="{ hot: i === 0 }">{{ o }}</li>
              </ul>
            </div>
          </div>
          <div class="addon last"><svg class="i16" viewBox="0 0 16 16" v-html="icons.search"></svg></div>
        </div>
        <div class="ccrow"><a>Add Cc</a><a>Add Bcc</a></div>
        <div class="subrow"><label>Subject<s>*</s></label><div class="box subject"></div></div>
        <div class="attrow">
          <label>Attachment</label>
          <div class="browse">Browse...</div>
          <span class="nofile">No file selected.</span>
          <div class="btn crm">Browse CRM</div>
        </div>
        <div class="actions">
          <div class="btn send">Send</div>
          <div class="btn draft">Save as Draft</div>
          <div class="btn tpl">Email Template</div>
        </div>

        <div class="editor">
          <div class="etop">
            <div v-for="(row, ri) in toolbarRows" :key="ri" class="erow">
              <div v-for="(g, gi) in row" :key="gi" class="group" :class="g.cls">
                <template v-if="g.combo"><span class="combo">{{ g.combo }}</span><svg class="ccaret" viewBox="0 0 16 16" v-html="icons.caret"></svg></template>
                <template v-for="(n, ni) in g.items || []" :key="ni">
                  <i v-if="n === '|'" class="esep"></i>
                  <div v-else class="eb" :class="n">
                    <svg class="i16" viewBox="0 0 16 16" v-html="icons[n]"></svg>
                    <span v-if="n === 'source'">Source</span>
                    <svg v-if="withMenu.includes(n)" class="mcaret" viewBox="0 0 16 16" v-html="icons.caret"></svg>
                  </div>
                </template>
              </div>
            </div>
          </div>
          <div class="earea"></div>
          <div class="ebot"><i></i></div>
        </div>
      </div>
    </section>

    <footer class="taskbar">
      <div class="start"><svg class="i16" viewBox="0 0 16 16" v-html="icons.win"></svg></div>
      <div class="cortana"><i></i><span>I’m Cortana. Ask me anything.</span></div>
      <svg class="tv" viewBox="0 0 22 18" v-html="icons.taskview"></svg>
      <div class="apps">
        <div v-for="a in apps" :key="a.icon" class="app" :class="{ run: a.run, active: a.active }">
          <svg viewBox="0 0 24 24" v-html="icons[a.icon]"></svg>
        </div>
      </div>
      <div class="tray">
        <svg viewBox="0 0 17 16" v-html="icons.trayUp"></svg>
        <svg viewBox="0 0 17 16" v-html="icons.speaker"></svg>
        <svg viewBox="0 0 17 16" v-html="icons.battery"></svg>
        <svg viewBox="0 0 17 16" v-html="icons.wifi"></svg>
        <svg viewBox="0 0 17 16" v-html="icons.notif"></svg>
        <svg class="kb" viewBox="0 0 22 15" v-html="icons.keyboard"></svg>
        <span>ENG</span>
      </div>
      <div class="clock"><div>12:13</div><div>11-08-2016</div></div>
      <i class="peek"></i>
    </footer>
  </div>
</template>

<style>
body { overflow: hidden; }
</style>

<style scoped>
* { box-sizing: border-box; }
.desktop { position: relative; width: 1600px; height: 900px; overflow: hidden; display: flex; flex-direction: column; font-family: "Open Sans", "Noto Sans", sans-serif; font-size: 13px; color: #333; white-space: nowrap; }
svg { display: block; flex: none; overflow: visible; }
.i16 { width: 16px; height: 16px; }
.vsep { width: 1px; height: 19px; background: #c8c8c8; flex: none; }
.vsep.short { height: 17px; }

.tabbar { height: 30px; background: #c5c5c5; display: flex; align-items: center; padding-left: 15px; flex: none; }
.tab { width: 210px; height: 22px; display: flex; align-items: center; padding: 0 9px 0 9px; border-right: 1px solid #999; color: #000; font-size: 12px; }
.tab span { margin-left: 6px; flex: 1; letter-spacing: -.2px; }
.tab .close { width: 15px; height: 15px; color: #555; }
.tab:nth-child(3) { border-color: transparent; }
.tab.active { height: 28px; align-self: flex-end; border: 0; background: #f6f6f6; border-radius: 9px 9px 0 0; position: relative; padding: 0 10px 1px 9px; width: 210px; }
.tab.active::before, .tab.active::after { content: ""; position: absolute; bottom: 0; width: 10px; height: 14px; }
.tab.active::before { left: -10px; background: radial-gradient(ellipse 10px 14px at 0 0, transparent 97%, #f6f6f6); }
.tab.active::after { right: -10px; background: radial-gradient(ellipse 10px 14px at 100% 0, transparent 97%, #f6f6f6); }
.newtab { width: 15px; height: 15px; margin-left: 10px; color: #444; }
.winbtns { margin-left: auto; display: flex; gap: 30px; padding-right: 15px; color: #555; }
.winbtns svg { width: 16px; height: 16px; }

.urlbar { height: 39px; flex: none; background: #f6f6f6; border-bottom: 1px solid #b4b9be; display: flex; align-items: center; padding-left: 5px; position: relative; }
.backbtn { width: 32px; height: 32px; border: 1px solid #c4c4c4; border-radius: 50%; background: #fafafa; display: flex; align-items: center; justify-content: center; z-index: 1; }
.backbtn svg { width: 15px; height: 15px; }
.field { height: 28px; background: #fff; border: 1px solid #dedede; display: flex; align-items: center; }
.address { width: 922px; margin-left: -4px; padding-left: 9px; border-left: 0; }
.address .vsep:nth-child(2) { margin: 0 5px 0 5px; }
.url { font-size: 14px; color: #7c7c7c; letter-spacing: -.3px; flex: 1; overflow: hidden; padding-top: 1px; }
.url b { font-weight: 400; color: #000; }
.reload { width: 15px; height: 15px; margin: 0 6px 0 9px; }
.searchbox { width: 282px; margin-left: 10px; padding-left: 6px; color: #777; }
.searchbox em { margin-left: 5px; font-size: 13.500px; }
.starbtn { margin-left: 13px; }
.starbtn + .vsep { margin-left: 7px; }
.tools { display: flex; gap: 20px; margin: 0 7px 0 7px; }
.drop { margin-left: 2px; color: #333; }
.menubtn { border-left: 1px solid #ddd; height: 38px; width: 43px; margin-left: auto; display: flex; align-items: center; justify-content: center; }
.menubtn svg { width: 17px; height: 15px; }

.page { flex: 1; display: flex; min-height: 0; }
.view { width: 1583px; height: 791px; overflow: hidden; display: flex; flex-direction: column; background: #fafafa; }
.scrollbar { width: 17px; background: #f0f0f0; display: flex; flex-direction: column; align-items: center; }
.scrollbar svg { width: 13px; height: 17px; color: #505050; }
.thumb { width: 15px; height: 660px; background: #cdcdcd; }
.scrollbar svg:last-child { margin-top: auto; }

.nav { height: 40px; flex: none; background: #e51400; color: #fff; display: grid; grid-template-columns: 50px 99.500px 72.500px 66px 101px 53.500px 70.500px 101.500px 71.500px 62px 61px 60px 86px 60px 1fr; align-items: center; border-bottom: 1px solid #d51500; -webkit-text-stroke: .5px #fff; }
.homecell { padding-left: 21px; -webkit-text-stroke: 0; padding-bottom: 1px; }
.navitem { height: 39px; padding: 0 0 2px 10px; display: flex; align-items: center; letter-spacing: -.24px; }
.navitem.on { background: #7d0a00; letter-spacing: -.3px; }
.navcaret { width: 15px; height: 15px; color: #f2675a; margin-left: 2px; }
.navright { display: flex; align-items: center; justify-content: flex-end; padding: 0 7px 2px 0; -webkit-text-stroke: 0; }
.navright .i16 { margin-right: 17px; }
.navright span { -webkit-text-stroke: .5px #fff; letter-spacing: -.25px; margin-right: -1px; }

.subhead { height: 50px; flex: none; background: #f2f2f2; border-bottom: 1px solid #fff; box-shadow: 0 1px 2px #888; display: flex; align-items: flex-start; padding-left: 20px; position: relative; z-index: 1; }
.logo { width: 182px; height: 36px; margin-top: 4px; background: #fff; color: #f47a20; font: 700 22px/26px "Liberation Sans", sans-serif; padding-left: 4px; letter-spacing: -.2px; }
.allrec { margin: 11px 0 0 67px; width: 151px; height: 30px; border: 1px solid #ccc; line-height: 29px; padding-left: 12px; background: #f0f0f0; }
.kw { margin-top: 11px; width: 219px; height: 30px; border: 1px solid #bbb; background: #fff; color: #aaa; line-height: 28px; padding-left: 4px; }
.go { margin: 11px 0 0 4px; width: 58px; height: 30px; background: #e51400; color: #fff; display: flex; justify-content: center; padding-top: 8px; }
.adv { margin: 11px 0 0 12px; line-height: 30px; width: 90px; letter-spacing: -.2px; }
.logout { margin: 9px 0 0 361px; color: #f00; -webkit-text-stroke: .45px #f00; letter-spacing: -.26px; width: 358px; }
.addbtn { width: 17px; height: 17px; margin: 17px 12px 0 0; }
.badge { width: 21px; height: 23px; margin-top: 14px; }

.body { flex: 1; display: flex; min-height: 0; }
.side { width: 270px; background: #e4e6ea; }
.main { flex: 1; padding: 46px 20px 0 20px; }
.filters { border-top: 2px solid #ddd; padding-top: 17px; display: flex; }
.finput { margin-left: 400px; width: 270px; height: 28px; background: #fff; border: 1px solid #ccc; }
.inlabel { margin: 4px 6px 0 7px; font-weight: 600; font-size: 12.500px; }
.fselect { width: 93px; height: 28px; border: 1px solid #ccc; background: #fff; display: flex; justify-content: space-between; font: 13.500px/28px "Liberation Sans", sans-serif; color: #555; padding-left: 8px; letter-spacing: -.4px; }
.fselect i { width: 18px; background: #e1e1e1; border: 1px solid #adadad; }
.fselect svg { width: 16px; height: 24px; }
.findbtn { width: 50px; height: 28px; margin-left: 3px; border: 1px solid #ccc; background: #f5f5f5; text-align: center; font: 700 13px/27px "Liberation Sans", sans-serif; }
.range { margin-left: auto; font-size: 12.500px; line-height: 31px; letter-spacing: -.2px; margin-right: 8px; }
.pg { width: 36px; height: 28px; border: 1px solid #bbb; background: #f5f5f5; display: flex; align-items: center; justify-content: center; }
.pg.off { width: 36px; margin-right: -1px; border-color: #ccc; background: #ebebeb; }
.list { margin-top: 25px; border: 1px solid #ddd; background: #fff; }
.lrow { height: 30.800px; display: grid; grid-template-columns: 44px 343px 673px 1fr; border-bottom: 1px solid #ddd; line-height: 30px; font-size: 12.500px; color: #222; -webkit-text-stroke: .5px #222; letter-spacing: -.03px; }
.lrow.read { -webkit-text-stroke: 0; color: #333; }
.lrow.head { height: 38px; background: linear-gradient(#fafafa, #f2f2f2); border-bottom: 2px solid #dcdcdc; line-height: 38px; color: #444; -webkit-text-stroke: .4px #444; }
.lrow.head .date { padding-left: 3px; }
.check i { display: block; width: 13px; height: 13px; border: 1px solid #222; margin: 8px 0 0 5px; }
.subj span { display: flex; justify-content: flex-end; }

.popup { position: absolute; left: 7px; top: 132px; width: 902px; height: 721px; background: #fff; border: 1px solid #dd6459; box-shadow: 0 3px 16px rgba(0, 0, 0, .45); z-index: 5; overflow: hidden; }
.ptitle { height: 30px; display: flex; align-items: center; padding: 0 0 1px 9px; color: #000; font-size: 12px; letter-spacing: -.25px; }
.ffx { width: 14px; height: 14px; margin-right: 6px; }
.pbtns { margin-left: auto; display: flex; gap: 29.500px; padding-right: 15px; }
.pbtns svg { width: 16px; height: 16px; }
.pbar { height: 39px; background: #f6f6f6; border-bottom: 1px solid #bbb; display: flex; align-items: center; padding-left: 3px; }
.paddr { width: 836px; height: 28px; border: 1px solid #e0e0e0; background: #efefef; display: flex; align-items: center; padding: 0 5px 0 6px; }
.paddr .vsep { margin: 0 5px 0 5px; }
.pplane { margin: 0 7px 0 13px; }
.pdrop { margin-left: 2px; }

.compose { padding: 0 20px; }
h1 { margin: 0; height: 44px; border-bottom: 2px solid #ddd; font-size: 18px; line-height: 46px; font-weight: 600; letter-spacing: .12px; }
label { width: 107px; padding-left: 10px; font-size: 12px; line-height: 20px; flex: none; }
label s { text-decoration: none; color: #f00; font-size: 12px; -webkit-text-stroke: .3px #f00; }
.torow { display: flex; padding-top: 25px; height: 61px; }
.box { height: 28px; border: 1px solid #ccc; box-shadow: inset 0 1px 2px #ddd; }
.box.to { width: 422px; height: 29px; border-color: #aaa; }
.sel { margin-left: 87px; font-size: 12px; line-height: 19px; font-weight: 600; width: 59px; letter-spacing: -.05px; }
.radios { display: flex; gap: 6px; font-size: 12px; line-height: 20px; letter-spacing: -.4px; }
.radios span { display: flex; }
.radios i { width: 13px; height: 13px; border: 1px solid #333; border-radius: 50%; margin: 5px 3px 0 1px; }
.pickrow { display: flex; height: 28px; margin-left: 646px; }
.addon { width: 28px; height: 28px; border: 1px solid #ccc; background: #f5f5f5; display: flex; align-items: center; justify-content: center; color: #222; }
.addon .i16 { width: 14px; height: 14px; }
.addon.last { border-left: 0; width: 27px; }
.picker { width: 150px; position: relative; margin-left: -1px; }
.pickhead { height: 28px; border: 1px solid #aaa; border-bottom: 0; background: linear-gradient(#eaeaea, #fff); display: flex; align-items: center; justify-content: space-between; padding: 0 5px 1px 8px; color: #444; }
.pickhead u { border: 4px solid transparent; border-top: 0; border-bottom: 5px solid #888; }
.pickmenu { position: absolute; top: 28px; left: 0; width: 150px; height: 182px; background: #fff; border: 1px solid #aaa; border-top: 0; border-radius: 0 0 4px 4px; box-shadow: 0 4px 5px rgba(0, 0, 0, .15); z-index: 3; padding: 3px 4px; }
.picksearch { height: 28px; width: 140px; border: 1px solid #aaa; box-shadow: 0 0 7px rgba(82, 168, 236, .7); display: flex; justify-content: space-between; padding: 4px 3px 0 5px; color: #999; }
.picksearch i { width: 1px; height: 16px; background: #555; margin-top: 2px; }
.picksearch svg { width: 15px; height: 15px; }
ul { list-style: none; margin: 19px 0 0 0; padding: 0; width: 133px; }
li { height: 25.300px; line-height: 26px; padding-left: 20px; }
li.hot { background: #e51400; color: #fff; }
.ccrow { display: flex; gap: 7px; margin-left: 106.500px; height: 42px; padding-top: 14px; font-size: 12px; color: #d01010; letter-spacing: -.1px; margin-top: 1px; line-height: 20px; }
.subrow { display: flex; height: 38px; }
.subrow .subject { width: 432px; }
.attrow { display: flex; height: 57px; }
.browse { margin: 1px 6px 0 1px; width: 75px; height: 26px; background: #e1e1e1; border: 1px solid #adadad; color: #000; text-align: center; font: 13px/27px "Liberation Sans", sans-serif; }
.nofile { font: 13px/30px "Liberation Sans", sans-serif; color: #555; width: 154px; }
.btn { height: 28px; border: 1px solid #ccc; background: #f5f5f5; text-align: center; font: 700 13px/27px "Liberation Sans", sans-serif; color: #333; letter-spacing: .1px; }
.crm { width: 91px; font-size: 11.500px; letter-spacing: 0; }
.actions { display: flex; }
.send { width: 55px; background: #5bb75b; border-color: #4ba64b; color: #fff; margin-right: 4px; }
.draft { width: 106px; }
.tpl { margin-left: auto; width: 119px; }

.editor { margin-top: 9px; border: 1px solid #b6b6b6; height: 340px; display: flex; flex-direction: column; }
.etop { height: 108px; border-bottom: 1px solid #b6b6b6; background: linear-gradient(#f5f5f5, #cfd1cf); padding: 6px 8px; display: flex; flex-direction: column; gap: 5px; }
.erow { display: flex; gap: 6px; }
.group { height: 28px; border: 1px solid #a6a6a6; border-bottom-color: #979797; border-radius: 3px; background: linear-gradient(#fff, #e4e4e4); display: flex; align-items: center; }
.group.wide { width: 91px; }
.group.narrow { width: 61px; }
.combo { font: 12px "Liberation Sans", sans-serif; color: #474747; padding-left: 10px; flex: 1; }
.ccaret { width: 13px; height: 13px; margin-right: 3px; }
.eb { width: 28px; height: 26px; display: flex; align-items: center; justify-content: center; }
.eb .i16 { width: 15.500px; height: 15.500px; }
.mcaret { width: 11px; height: 12px; margin-left: 1px; }
.eb.spell { width: 36px; background: #aaa; box-shadow: inset 0 0 4px #666; margin-left: -1px; }
.eb.color, .eb.bgcolor { width: 35px; }
.eb.source { width: 70px; gap: 4px; font: 12px "Liberation Sans", sans-serif; color: #474747; }
.esep { width: 1px; height: 18px; background: #bbb; margin: 0 2px; }
.earea { flex: 1; background: #fff; }
.ebot { height: 30px; border-top: 1px solid #b6b6b6; background: linear-gradient(#ebebeb, #cfd1cf); display: flex; justify-content: flex-end; }
.ebot i { border: 5px solid transparent; border-right-color: #666; border-bottom-color: #666; width: 0; height: 0; margin: 12px 4px 0 0; }

.taskbar { position: relative; z-index: 6; height: 40px; flex: none; background: linear-gradient(90deg, #120c0a, #22110d 30%, #140e0d 60%, #1c1411 80%, #26100f 90%, #150d0c); display: flex; align-items: center; color: #fff; }
.start { width: 48px; display: flex; justify-content: center; }
.cortana { width: 344px; height: 40px; background: #333; display: flex; align-items: center; padding-left: 10px; color: #a3a3a3; font-size: 15px; letter-spacing: -.37px; }
.cortana i { width: 21px; height: 21px; border: 3px solid #f2f2f2; border-radius: 50%; margin-right: 9px; }
.tv { width: 22px; height: 18px; margin-left: 13px; }
.apps { display: flex; margin-left: 14.500px; }
.app { width: 44.150px; height: 40px; display: flex; align-items: center; justify-content: center; background: linear-gradient(#f7b0aa, #f7b0aa) no-repeat center bottom / 0 2px; }
.app svg { width: 23px; height: 23px; }
.app.run { background-size: 35px 2px; }
.app.active { background: linear-gradient(#f7b0aa, #f7b0aa) no-repeat center bottom / 43px 2px, #4b3b3a; }
.tray { display: flex; align-items: center; gap: 7.500px; margin-left: 6.500px; font-size: 12px; }
.tray svg { width: 17px; height: 16px; }
.tray .kb { width: 22px; height: 15px; }
.tray span { letter-spacing: -.35px; margin-left: 3px; padding-bottom: 1px; }
.clock { margin-left: auto; width: 62px; text-align: center; font-size: 12px; line-height: 17px; letter-spacing: -.45px; padding-bottom: 1px; }
.peek { width: 1px; height: 40px; background: #777; margin: 0 4px 0 9px; }
</style>
